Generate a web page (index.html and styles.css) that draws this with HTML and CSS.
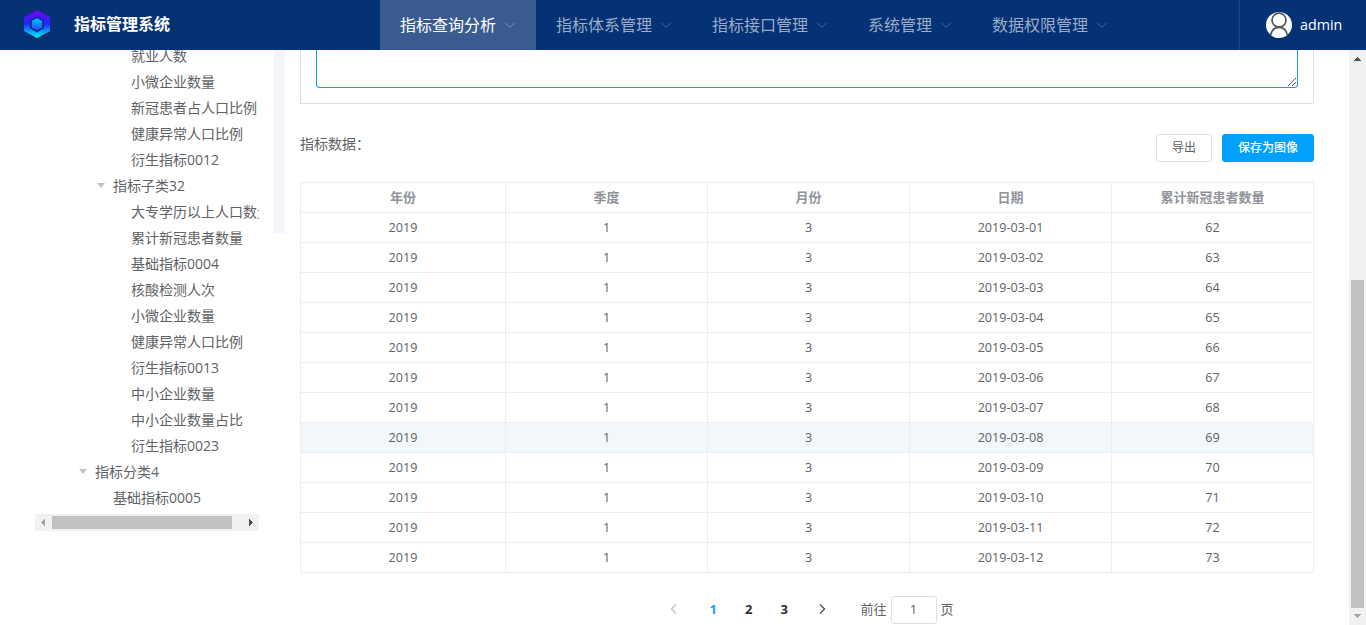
FILE: index.html
```html
<!DOCTYPE html>
<html lang="zh-CN">
<head>
<meta charset="utf-8">
<title>指标管理系统</title>
<link rel="stylesheet" href="styles.css">
</head>
<body>
<header class="header">
  <div class="brand">
    <svg class="logo" width="28" height="30" viewBox="0 0 28 30">
      <defs><linearGradient id="g" x1="0" y1="0" x2="0" y2="1"><stop offset="0" stop-color="#7a00f0"/><stop offset=".5" stop-color="#1a2cff"/><stop offset="1" stop-color="#00fff0"/></linearGradient>
      <linearGradient id="h" x1="0" y1="0" x2="0" y2="1"><stop offset="0" stop-color="#00c4ff"/><stop offset="1" stop-color="#1b4cff"/></linearGradient></defs>
      <path d="M14 1 27 8v14l-13 7L1 22V8z" fill="url(#g)"/>
      <path d="M14 7.5l7 3.8v8l-7 3.9-7-3.9v-8z" fill="#0a2a78"/>
      <path d="M14 9l5.3 3v6.4l-5.3 3-5.3-3V12z" fill="url(#h)"/>
    </svg>
    <span class="title">指标管理系统</span>
  </div>
  <nav class="nav">
    <a class="nav-item active">指标查询分析<svg class="caret" viewBox="0 0 12 12"><path d="M1.5 4 6 8.5 10.5 4"/></svg></a>
    <a class="nav-item">指标体系管理<svg class="caret" viewBox="0 0 12 12"><path d="M1.5 4 6 8.5 10.5 4"/></svg></a>
    <a class="nav-item">指标接口管理<svg class="caret" viewBox="0 0 12 12"><path d="M1.5 4 6 8.5 10.5 4"/></svg></a>
    <a class="nav-item">系统管理<svg class="caret" viewBox="0 0 12 12"><path d="M1.5 4 6 8.5 10.5 4"/></svg></a>
    <a class="nav-item">数据权限管理<svg class="caret" viewBox="0 0 12 12"><path d="M1.5 4 6 8.5 10.5 4"/></svg></a>
  </nav>
  <div class="user">
    <svg class="avatar" width="26" height="26" viewBox="0 0 26 26"><circle cx="13" cy="13" r="13" fill="#fff"/><g fill="none" stroke="#555" stroke-width="1.7"><circle cx="13" cy="8.2" r="7"/><path d="M4.6 23.2C5.6 18.2 9 15.4 13 15.4s7.4 2.8 8.4 7.8"/></g></svg>
    <span>admin</span>
  </div>
</header>
<div class="body">
  <aside class="side">
    <div class="tree">
      <div class="node l3">就业人数</div>
      <div class="node l3">小微企业数量</div>
      <div class="node l3">新冠患者占人口比例</div>
      <div class="node l3">健康异常人口比例</div>
      <div class="node l3">衍生指标0012</div>
      <div class="node l2"><i class="tri"></i>指标子类32</div>
      <div class="node l3">大专学历以上人口数量</div>
      <div class="node l3">累计新冠患者数量</div>
      <div class="node l3">基础指标0004</div>
      <div class="node l3">核酸检测人次</div>
      <div class="node l3">小微企业数量</div>
      <div class="node l3">健康异常人口比例</div>
      <div class="node l3">衍生指标0013</div>
      <div class="node l3">中小企业数量</div>
      <div class="node l3">中小企业数量占比</div>
      <div class="node l3">衍生指标0023</div>
      <div class="node l1"><i class="tri"></i>指标分类4</div>
      <div class="node l2">基础指标0005</div>
    </div>
    <div class="hbar">
      <svg width="17" height="17" viewBox="0 0 17 17" shape-rendering="crispEdges"><path d="M10 4.5v8L6 8.5z" fill="#a3a3a3"/></svg>
      <div class="hthumb"></div>
      <svg class="right" width="17" height="17" viewBox="0 0 17 17" shape-rendering="crispEdges"><path d="M7 4.5v8l4-4z" fill="#505050"/></svg>
    </div>
  </aside>
  <div class="splitter"></div>
  <main class="main">
    <div class="panel"><div class="textarea"><svg class="grip" width="10" height="10" viewBox="0 0 10 10"><path d="M1 9 9 1M5 9 9 5" stroke="#555" fill="none"/></svg></div></div>
    <div class="toolbar">
      <span class="label">指标数据：</span>
      <button class="btn">导出</button>
      <button class="btn primary">保存为图像</button>
    </div>
    <table class="grid">
      <colgroup><col class="first"><col><col><col><col></colgroup>
      <thead><tr><th>年份</th><th>季度</th><th>月份</th><th>日期</th><th>累计新冠患者数量</th></tr></thead>
      <tbody>
        <tr><td>2019</td><td>1</td><td>3</td><td>2019-03-01</td><td>62</td></tr>
        <tr><td>2019</td><td>1</td><td>3</td><td>2019-03-02</td><td>63</td></tr>
        <tr><td>2019</td><td>1</td><td>3</td><td>2019-03-03</td><td>64</td></tr>
        <tr><td>2019</td><td>1</td><td>3</td><td>2019-03-04</td><td>65</td></tr>
        <tr><td>2019</td><td>1</td><td>3</td><td>2019-03-05</td><td>66</td></tr>
        <tr><td>2019</td><td>1</td><td>3</td><td>2019-03-06</td><td>67</td></tr>
        <tr><td>2019</td><td>1</td><td>3</td><td>2019-03-07</td><td>68</td></tr>
        <tr class="hover"><td>2019</td><td>1</td><td>3</td><td>2019-03-08</td><td>69</td></tr>
        <tr><td>2019</td><td>1</td><td>3</td><td>2019-03-09</td><td>70</td></tr>
        <tr><td>2019</td><td>1</td><td>3</td><td>2019-03-10</td><td>71</td></tr>
        <tr><td>2019</td><td>1</td><td>3</td><td>2019-03-11</td><td>72</td></tr>
        <tr><td>2019</td><td>1</td><td>3</td><td>2019-03-12</td><td>73</td></tr>
      </tbody>
    </table>
    <div class="pager">
      <svg class="arrow prev" viewBox="0 0 12 12"><path d="M8 1.5 3.5 6 8 10.5"/></svg>
      <span class="num on">1</span><span class="num">2</span><span class="num">3</span>
      <svg class="arrow next" viewBox="0 0 12 12"><path d="M4 1.5 8.5 6 4 10.5"/></svg>
      <span class="goto">前往</span><span class="page-input">1</span><span class="unit">页</span>
    </div>
  </main>
  <div class="vbar">
    <svg width="17" height="17" viewBox="0 0 17 17" shape-rendering="crispEdges"><path d="M4.5 11h8l-4-4z" fill="#505050"/></svg>
    <div class="vthumb"></div>
    <svg width="17" height="17" viewBox="0 0 17 17" shape-rendering="crispEdges"><path d="M4.5 6h8l-4 4z" fill="#a3a3a3"/></svg>
  </div>
</div>
</body>
</html>
```

FILE: styles.css
```css
* { box-sizing: border-box; }
body {
  margin: 0;
  height: 625px;
  overflow: hidden;
  display: flex;
  flex-direction: column;
  background: #fff;
  color: #606266;
  font: 14px/1.4 "Open Sans", "Noto Sans CJK SC", sans-serif;
}
svg { display: block; flex: none; }

.header { height: 50px; flex: none; display: flex; background: #053274; color: #fff; }
.brand { width: 380px; display: flex; align-items: center; padding: 0 0 2px 23px; }
.title { margin-left: 23px; font-size: 16px; font-weight: 700; }
.nav { flex: 1; display: flex; }
.nav-item {
  display: flex;
  align-items: center;
  padding: 0 20px;
  font-size: 16px;
  color: #9badc8;
}
.nav-item.active { background: #395b8f; color: #fff; }
.caret { width: 12px; height: 12px; margin-left: 8px; fill: none; stroke: #4a6897; }
.active .caret { stroke: #8095b8; }
.user {
  width: 127px;
  display: flex;
  align-items: center;
  gap: 8px;
  padding-left: 26px;
  border-left: 1px solid #1e4782;
  font-size: 14.3px;
}

.body { flex: 1; min-height: 0; display: flex; overflow: hidden; }
.side { width: 224px; margin-left: 35px; flex: none; }
.tree { height: 464px; overflow: hidden; display: flex; flex-direction: column; }
.node { flex: none; height: 26px; line-height: 26px; white-space: nowrap; display: flex; align-items: center; }
.node:first-child { height: 19px; align-items: flex-end; }
.l1 { padding-left: 44px; }
.l2 { padding-left: 62px; }
.l3 { padding-left: 96px; }
.l2:last-child { padding-left: 78px; }
.tri {
  border: 4px solid transparent;
  border-top: 5px solid #c0c4cc;
  border-bottom: 0;
  margin: 0 8px 1px 0;
}
.hbar { height: 17px; display: flex; align-items: center; background: #f1f1f1; }
.hthumb { width: 180px; height: 13px; background: #c1c1c1; }
.right { margin-left: auto; }
.splitter { width: 11px; height: 183px; margin-left: 15px; background: #f4f4fa; flex: none; }

.main { width: 1014px; margin-left: 15px; flex: none; }
.panel { height: 54px; padding: 0 15px; border: 1px solid #dcdfe6; border-top: 0; }
.textarea {
  height: 38px;
  border: 1px solid #0d9cee;
  border-top: 0;
  border-radius: 0 0 4px 4px;
  display: flex;
  justify-content: flex-end;
  align-items: flex-end;
}
.toolbar { display: flex; height: 28px; margin-top: 30px; }
.label { flex: 1; line-height: 20px; }
.btn {
  width: 56px;
  height: 28px;
  padding: 0;
  border: 1px solid #dcdfe6;
  border-radius: 3px;
  background: #fff;
  color: #606266;
  font: 12px/1 "Open Sans", "Noto Sans CJK SC", sans-serif;
}
.primary { width: 92px; margin-left: 10px; background: #00a0ff; border-color: #00a0ff; color: #fff; font-weight: 500; }

.grid {
  width: 1014px;
  margin-top: 20px;
  table-layout: fixed;
  border-spacing: 0;
  border: 1px solid #e9eef5;
  border-width: 1px 0 0 1px;
  font-size: 13px;
  text-align: center;
}
.first { width: 205px; }
.grid th, .grid td {
  height: 30px;
  padding: 0;
  line-height: 20px;
  border: 1px solid #e9eef5;
  border-width: 0 1px 1px 0;
}
.grid th { padding-bottom: 2px; color: #909399; font-weight: 700; }
.grid td { font-size: 12.6px; }
.hover { background: #f2f7fa; }

.pager { display: flex; align-items: center; height: 28px; margin-top: 23px; padding-left: 368px; font-size: 13px; }
.arrow { width: 12px; height: 12px; margin-bottom: 3px; fill: none; stroke-width: 1.4; }
.prev { stroke: #c0c4cc; margin-right: 15.5px; }
.next { stroke: #505256; margin-left: 14px; }
.num { width: 35.5px; padding-bottom: 2px; text-align: center; font-weight: 700; color: #303133; }
.on { color: #1e9fff; }
.goto { margin-left: 32.5px; margin-right: 4px; padding-bottom: 2px; }
.unit { padding-bottom: 2px; }
.page-input {
  width: 46px;
  height: 28px;
  margin-right: 4px;
  border: 1px solid #dcdfe6;
  border-radius: 3px;
  text-align: center;
  line-height: 25px;
}
.vbar { width: 17px; margin-left: auto; background: #f1f1f1; display: flex; flex-direction: column; align-items: center; }
.vthumb { width: 13px; height: 328px; margin-top: auto; background: #c1c1c1; }
```
